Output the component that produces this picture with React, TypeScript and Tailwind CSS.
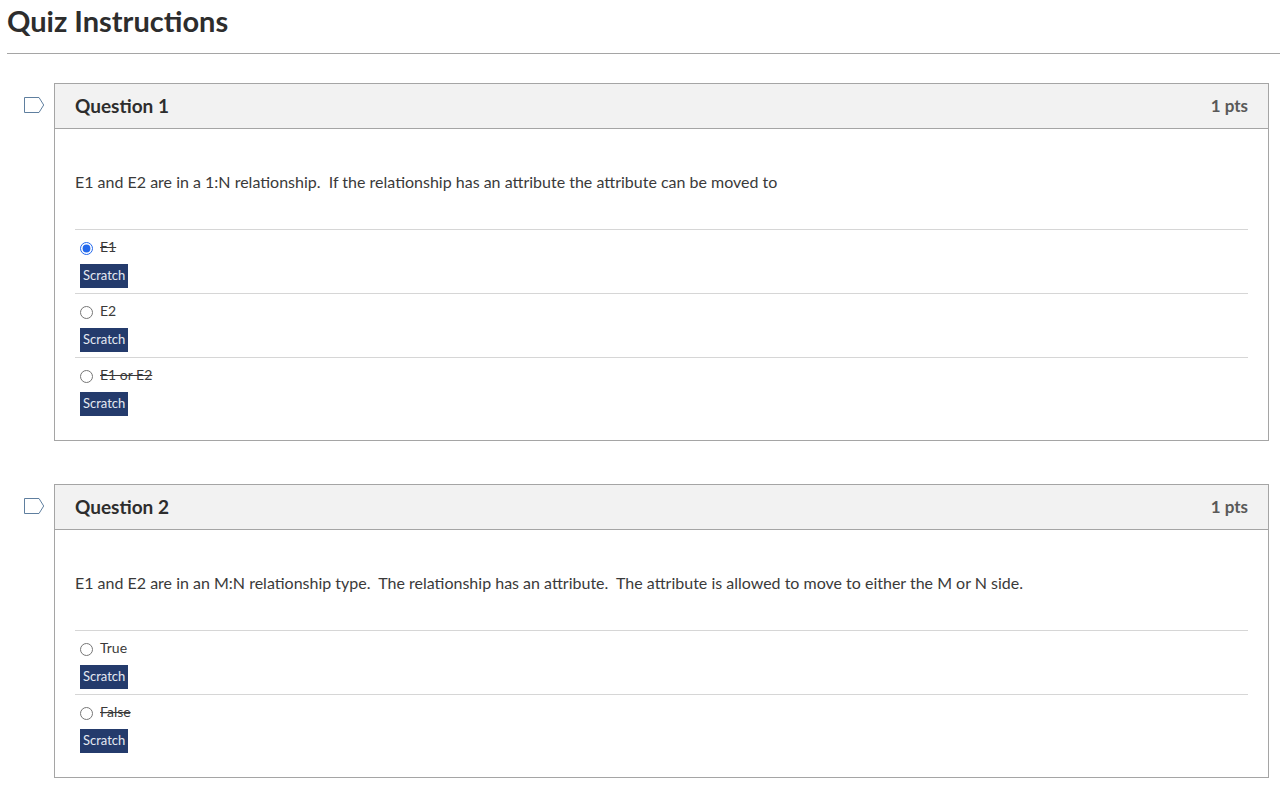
import { useState } from "react";

type Answer = { text: string; struck?: boolean; selected?: boolean };
type QuestionData = { id: number; points: number; prompt: string; answers: Answer[] };

const questions: QuestionData[] = [
  {
    id: 1,
    points: 1,
    prompt:
      "E1 and E2 are in a 1:N relationship.\u00a0 If the relationship has an attribute the attribute can be moved to",
    answers: [
      { text: "E1", struck: true, selected: true },
      { text: "E2" },
      { text: "E1 or E2", struck: true },
    ],
  },
  {
    id: 2,
    points: 1,
    prompt:
      "E1 and E2 are in an M:N relationship type.\u00a0 The relationship has an attribute.\u00a0 The attribute is allowed to move to either the M or N side.",
    answers: [{ text: "True" }, { text: "False", struck: true }],
  },
];

function FlagButton({ id }: { id: number }) {
  const [flagged, setFlagged] = useState(false);
  return (
    <button
      type="button"
      aria-label={`Flag question ${id}`}
      aria-pressed={flagged}
      onClick={() => setFlagged(!flagged)}
      className="mt-3 mr-2 h-5 w-6 shrink-0"
    >
      <svg viewBox="0 0 24 20" className="h-5 w-6" stroke="#5f7f9f" strokeWidth="1" fill={flagged ? "#f5d66b" : "none"}>
        <path d="M2.5 2.5H17L21.7 10L17 17.5H2.5Z" />
      </svg>
    </button>
  );
}

function AnswerRow({ questionId, index, answer }: { questionId: number; index: number; answer: Answer }) {
  const [struck, setStruck] = useState(!!answer.struck);
  const inputId = `question-${questionId}-answer-${index}`;
  return (
    <li className="border-t border-[#d6d6d6] px-[5px] pt-[7px] pb-[5px]">
      <div className="flex h-5 items-center">
        <input
          type="radio"
          id={inputId}
          name={`question-${questionId}`}
          defaultChecked={answer.selected}
          className="mt-[3px] mr-[7px] size-[13px] shrink-0 accent-[#2368ec]"
        />
        <label htmlFor={inputId} className={struck ? "text-sm line-through" : "text-sm"}>
          {answer.text}
        </label>
      </div>
      <button
        type="button"
        onClick={() => setStruck(!struck)}
        className="mt-[7px] block h-6 bg-[#243b6c] px-[3px] text-[13px] text-[#e4e9f2]"
      >
        Scratch
      </button>
    </li>
  );
}

function Question({ question }: { question: QuestionData }) {
  return (
    <section className="flex items-start">
      <FlagButton id={question.id} />
      <div className="min-w-0 flex-1 border border-[#a5a5a5]">
        <header className="flex h-[45px] items-center justify-between border-b border-[#a5a5a5] bg-[#f2f2f2] px-5">
          <h2 className="text-[19px] font-bold text-[#2d2d2d]">Question {question.id}</h2>
          <span className="text-[17px] font-bold text-[#595959]">{question.points} pts</span>
        </header>
        <div className="px-5 pb-[19px]">
          <p className="pt-[41px] pb-[35px] text-base">{question.prompt}</p>
          <ul>
            {question.answers.map((answer, index) => (
              <AnswerRow key={answer.text} questionId={question.id} index={index} answer={answer} />
            ))}
          </ul>
        </div>
      </div>
    </section>
  );
}

export default function App() {
  return (
    <main className="min-h-screen bg-white pl-[7px] font-['Lato',sans-serif] text-[#3a3a3a]">
      <h1 className="border-b border-[#a5a5a5] pt-[3px] pb-[14px] text-[29px] leading-9 font-bold text-[#2d2d2d]">
        Quiz Instructions
      </h1>
      <div className="flex flex-col gap-[43px] pt-[29px] pr-[11px] pb-5 pl-[15px]">
        {questions.map((question) => (
          <Question key={question.id} question={question} />
        ))}
      </div>
    </main>
  );
}
